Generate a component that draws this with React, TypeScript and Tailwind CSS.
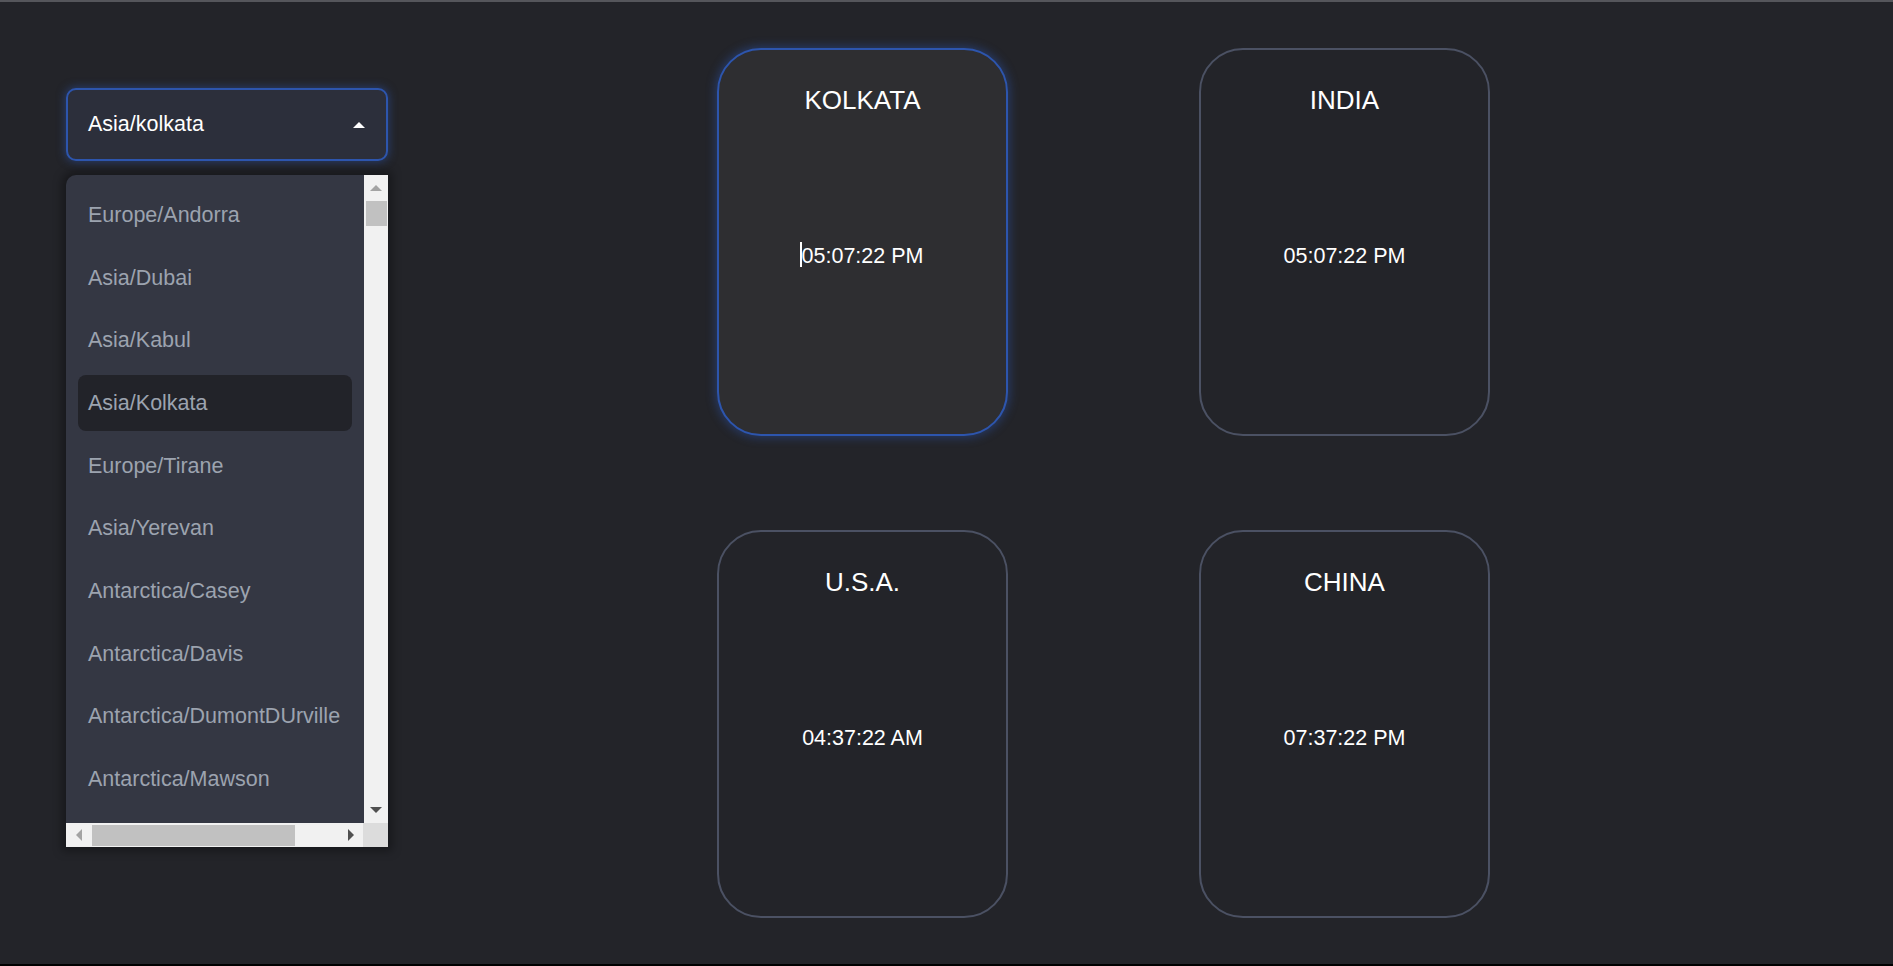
const zones = [
  'Europe/Andorra',
  'Asia/Dubai',
  'Asia/Kabul',
  'Asia/Kolkata',
  'Europe/Tirane',
  'Asia/Yerevan',
  'Antarctica/Casey',
  'Antarctica/Davis',
  'Antarctica/DumontDUrville',
  'Antarctica/Mawson',
];

const clocks = [
  { name: 'KOLKATA', time: '05:07:22 PM', active: true },
  { name: 'INDIA', time: '05:07:22 PM', active: false },
  { name: 'U.S.A.', time: '04:37:22 AM', active: false },
  { name: 'CHINA', time: '07:37:22 PM', active: false },
];

function Arrow({ dir, color }: { dir: 'up' | 'down' | 'left' | 'right'; color: string }) {
  const pts = {
    up: '0,8 6,2 12,8',
    down: '0,2 6,8 12,2',
    left: '8,0 2,6 8,12',
    right: '2,0 8,6 2,12',
  }[dir];
  const vertical = dir === 'up' || dir === 'down';
  return (
    <svg width={vertical ? 12 : 10} height={vertical ? 10 : 12} viewBox={vertical ? '0 0 12 10' : '0 0 10 12'}>
      <polygon points={pts} fill={color} />
    </svg>
  );
}

function ZoneDropdown() {
  return (
    <div className="w-[322px] h-[672px] flex flex-col rounded-tl-[10px] bg-[#343743] shadow-[0_0_10px_4px_rgba(0,0,0,0.35)] overflow-hidden">
      <div className="flex flex-1 min-h-0">
        <div className="flex-1 overflow-hidden pt-[12px] px-[12px] flex flex-col gap-[6.7px]">
          {zones.map((z) => (
            <div
              key={z}
              className={`h-[56px] shrink-0 flex items-center pl-[10px] rounded-[8px] text-[21.5px] text-[#9ca3af] whitespace-nowrap ${
                z === 'Asia/Kolkata' ? 'bg-[#222329]' : ''
              }`}
            >
              {z}
            </div>
          ))}
        </div>
        <div className="w-[24px] bg-[#f1f1f1] flex flex-col items-center">
          <div className="h-[26px] flex items-center justify-center">
            <Arrow dir="up" color="#a3a3a3" />
          </div>
          <div className="w-[21px] h-[25px] bg-[#c1c1c1]" />
          <div className="flex-1" />
          <div className="h-[26px] flex items-center justify-center">
            <Arrow dir="down" color="#505050" />
          </div>
        </div>
      </div>
      <div className="h-[24px] flex bg-[#f1f1f1]">
        <div className="flex-1 flex items-center">
          <div className="w-[26px] flex justify-center">
            <Arrow dir="left" color="#a3a3a3" />
          </div>
          <div className="w-[203px] h-[21px] bg-[#c1c1c1]" />
          <div className="flex-1" />
          <div className="w-[24px] flex justify-center">
            <Arrow dir="right" color="#505050" />
          </div>
        </div>
        <div className="w-[25px] bg-[#dcdcdc]" />
      </div>
    </div>
  );
}

function ClockCard({ name, time, active }: { name: string; time: string; active: boolean }) {
  return (
    <div
      className={`w-[291px] h-[388px] rounded-[44px] border-2 flex flex-col items-center pt-[35px] text-white ${
        active
          ? 'border-[#2d55ad] bg-[#2e2e31] shadow-[0_0_10px_2px_rgba(45,85,173,0.45)]'
          : 'border-[#4b5163] bg-[#232429]'
      }`}
    >
      <div className="text-[26px] leading-[30px]">{name}</div>
      <div className="relative mt-[128px] text-[21.5px] leading-[26px]">
        {active && <span className="absolute -left-[2px] -top-[1px] w-[2px] h-[25px] bg-white" />}
        {time}
      </div>
    </div>
  );
}

export default function App() {
  return (
    <div
      className="min-h-screen h-[966px] bg-[#232429] border-t-2 border-[#55565b] border-b-2 border-b-black flex items-start overflow-hidden"
      style={{ fontFamily: '"Liberation Sans", Arial, sans-serif' }}
    >
      <div className="pl-[66px] pt-[86px] flex flex-col gap-[14px]">
        <div className="w-[322px] h-[73px] rounded-[10px] border-2 border-[#2d55ad] bg-[#2c2f3b] shadow-[0_0_8px_1px_rgba(45,85,173,0.5)] flex items-center justify-between pl-[20px] pr-[21px]">
          <span className="text-[21.5px] text-white">Asia/kolkata</span>
          <Arrow dir="up" color="#ffffff" />
        </div>
        <ZoneDropdown />
      </div>
      <div className="ml-[329px] pt-[46px] grid grid-cols-2 gap-x-[191px] gap-y-[94px]">
        {clocks.map((c) => (
          <ClockCard key={c.name} {...c} />
        ))}
      </div>
    </div>
  );
}
